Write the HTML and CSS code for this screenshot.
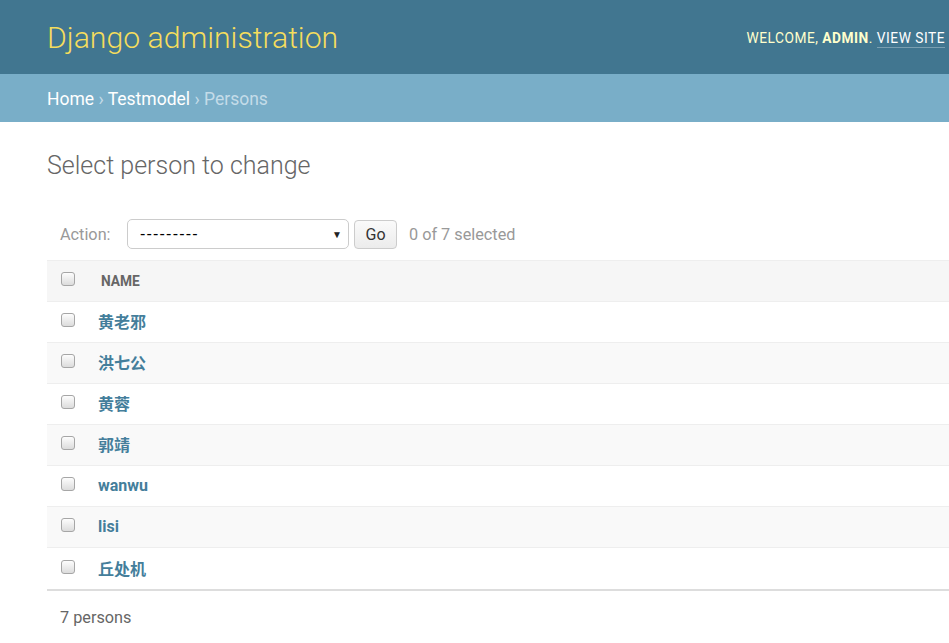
FILE: index.html
```html
<!DOCTYPE html>
<html>
<head>
<meta charset="utf-8">
<title>Select person to change</title>
<link rel="stylesheet" href="styles.css">
</head>
<body>
<div class="header">
  <div class="branding">Django administration</div>
  <div class="user-tools">WELCOME, <strong>ADMIN</strong>. <a class="view-site" href="#">VIEW SITE</a></div>
</div>
<div class="breadcrumbs"><a href="#">Home</a> › <a href="#">Testmodel</a> › Persons</div>
<div class="content">
  <h1 class="title">Select person to change</h1>
  <div class="actions">
    <span class="action-label">Action:</span>
    <div class="select"><span class="dashes">---------</span><span class="arrow">▼</span></div>
    <button class="go" type="button">Go</button>
    <span class="counter">0 of 7 selected</span>
  </div>
  <div class="table">
    <div class="row head"><span class="check"></span><span class="name-head">NAME</span></div>
    <div class="row"><span class="check"></span><a class="name" href="#">黄老邪</a></div>
    <div class="row alt"><span class="check"></span><a class="name" href="#">洪七公</a></div>
    <div class="row"><span class="check"></span><a class="name" href="#">黄蓉</a></div>
    <div class="row alt"><span class="check"></span><a class="name" href="#">郭靖</a></div>
    <div class="row"><span class="check"></span><a class="name" href="#">wanwu</a></div>
    <div class="row alt"><span class="check"></span><a class="name" href="#">lisi</a></div>
    <div class="row last"><span class="check"></span><a class="name" href="#">丘处机</a></div>
  </div>
  <p class="paginator">7 persons</p>
</div>
</body>
</html>
```
FILE: styles.css
```css
* { box-sizing: border-box; }
html, body { margin: 0; padding: 0; }
body {
  font-family: Roboto, "Liberation Sans", "Noto Sans CJK SC", sans-serif;
  color: #333;
  background: #fff;
  overflow: hidden;
}
a { text-decoration: none; }

.header {
  height: 74px;
  background: #417690;
  display: flex;
  align-items: center;
  justify-content: space-between;
  padding: 0 4px 0 47px;
}
.branding {
  font-size: 30.2px;
  font-weight: 300;
  color: #f5dd5d;
  margin-top: 1px;
}
.user-tools {
  font-size: 13.75px;
  letter-spacing: 0.5px;
  color: #ffc;
  margin-top: 2px;
}
.user-tools strong { font-weight: 700; }
.view-site {
  color: #fff;
  border-bottom: 1px solid rgba(255,255,255,0.3);
  padding-bottom: 1px;
}

.breadcrumbs {
  height: 48px;
  background: #79aec8;
  color: #c4dce8;
  font-size: 17.5px;
  padding: 13px 0 0 47px;
  line-height: 24px;
}
.breadcrumbs a { color: #fff; }

.content {
  padding: 0 0 0 47px;
}
.title {
  margin: 0;
  padding-top: 29px;
  height: 87px;
  font-size: 25px;
  font-weight: 300;
  color: #666;
  line-height: 30px;
}

.actions {
  height: 50px;
  display: flex;
  align-items: center;
  padding-left: 13px;
  color: #999;
  font-size: 16.25px;
}
.action-label { width: 67px; }
.select {
  width: 222px;
  height: 30px;
  border: 1px solid #ccc;
  border-radius: 5px;
  background: #fff;
  display: flex;
  align-items: center;
  justify-content: space-between;
  padding: 0 6px 0 12px;
  color: #000;
  font-family: "Liberation Sans", sans-serif;
  font-size: 16px;
}
.dashes { letter-spacing: 1.2px; }
.arrow { font-size: 10px; color: #222; }
.go {
  margin-left: 5px;
  width: 43px;
  height: 29px;
  border: 1px solid #ccc;
  border-radius: 4px;
  background: linear-gradient(#fafafa, #ececec);
  font-family: Roboto, sans-serif;
  font-size: 16px;
  color: #333;
  padding: 0;
}
.counter { margin-left: 12px; }

.table { border-bottom: 2px solid #ddd; margin-top: 1px; }
.row {
  height: 41px;
  display: flex;
  align-items: center;
  border-bottom: 1px solid #eee;
  background: #fff;
}
.row.alt { background: #f9f9f9; }
.row.head { background: #f6f6f6; border-top: 1px solid #eee; height: 42px; }
.row.last { border-bottom: none; }
.check {
  width: 14px;
  height: 14px;
  margin-left: 14px;
  margin-top: -4px;
  border: 1px solid #a6a6a6;
  border-radius: 3px;
  background: linear-gradient(#fdfdfd, #dcdcdc);
  flex: none;
}
.name-head {
  margin-left: 26px;
  font-size: 13.75px;
  font-weight: 700;
  color: #666;
}
.name {
  margin-left: 23px;
  margin-top: -2px;
  font-size: 16px;
  font-weight: 700;
  color: #447e9b;
  font-family: Roboto, "Noto Sans CJK SC", sans-serif;
}
.paginator {
  margin: 0;
  padding: 17px 0 0 13px;
  font-size: 16.25px;
  color: #666;
}
```
